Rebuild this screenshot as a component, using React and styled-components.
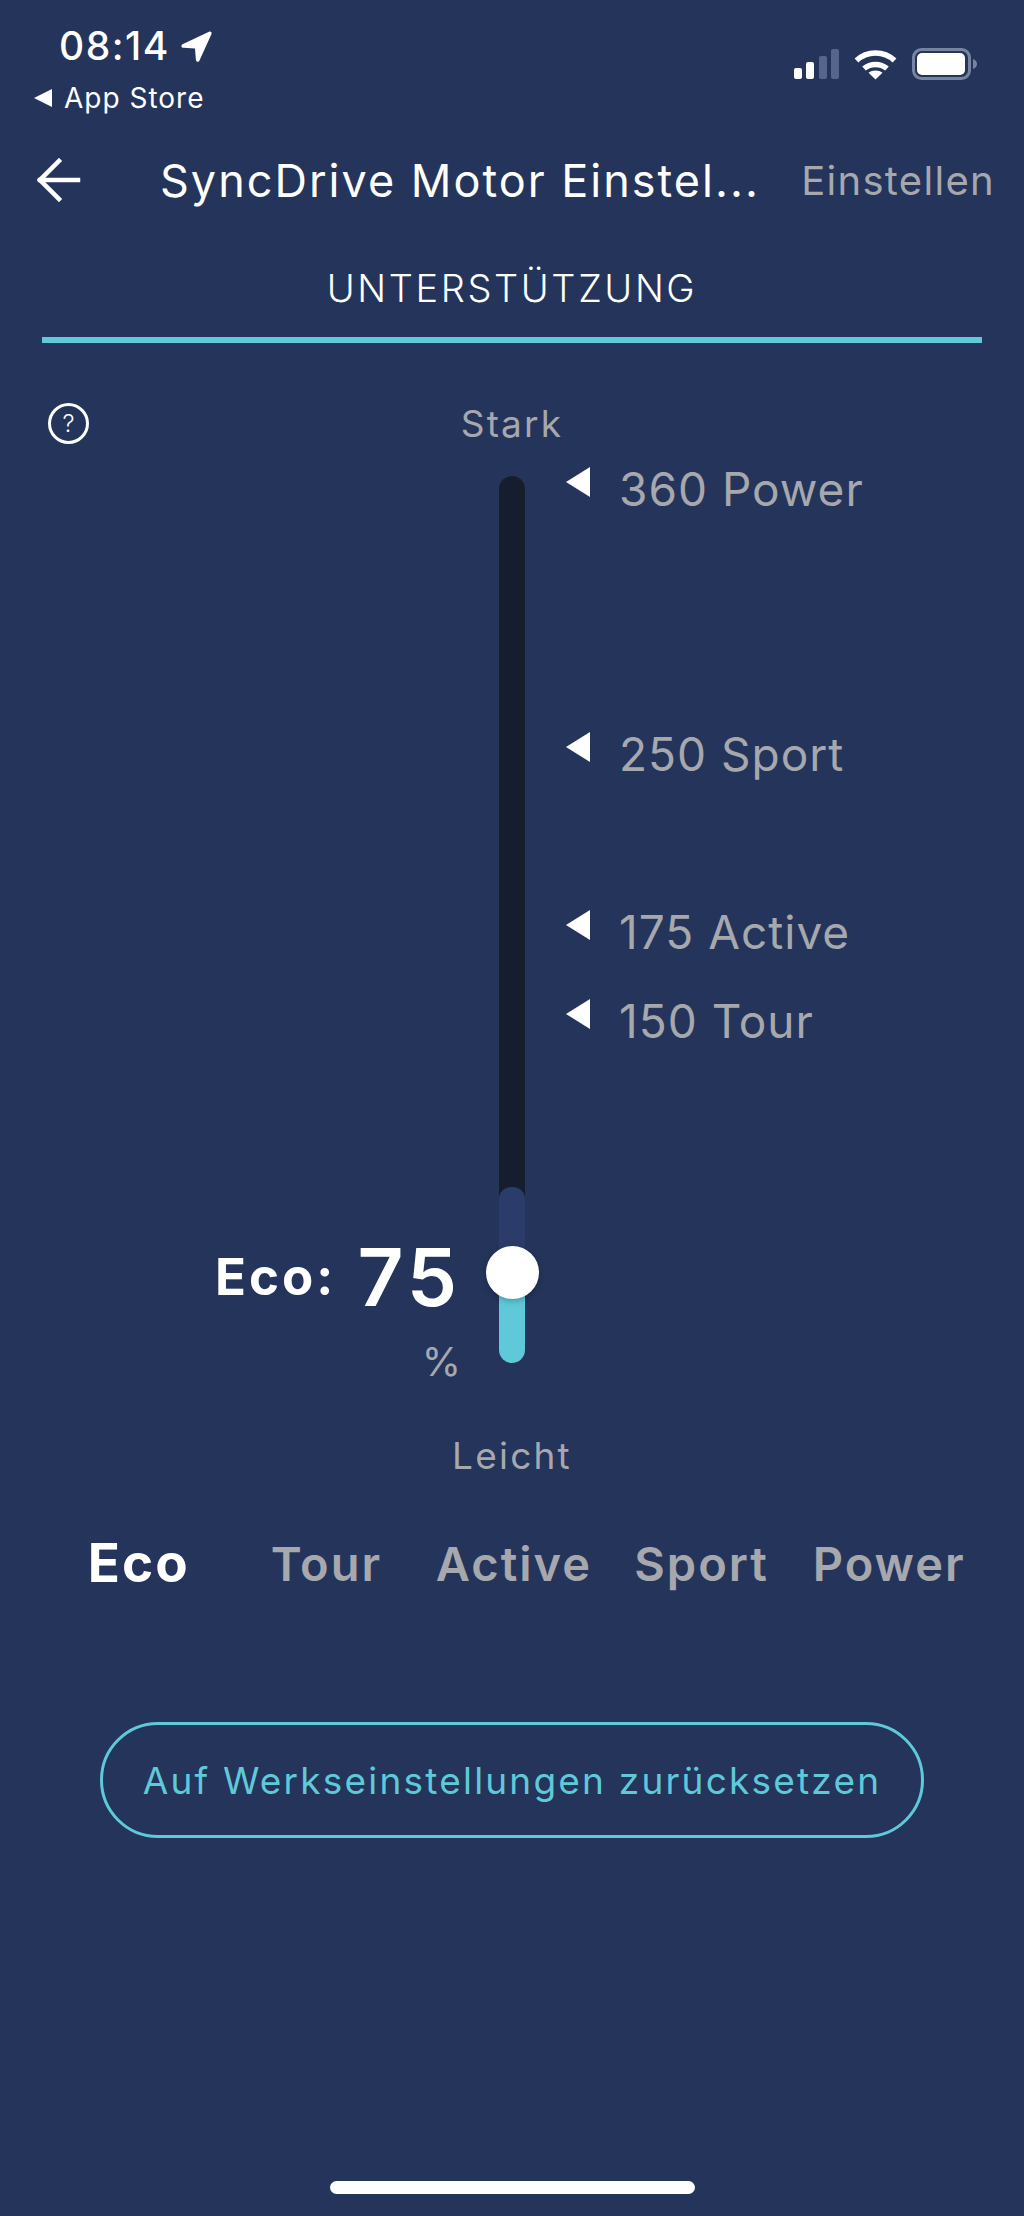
import styled, { createGlobalStyle } from 'styled-components';

const GlobalStyle = createGlobalStyle`
    html, body {
        margin: 0;
        padding: 0;
        background: #24345b;
    }
    * {
        box-sizing: border-box;
    }
`;

const GREY = '#a6a8ad';
const TEAL = '#5fc9d9';

const Page = styled.div`
    width: 1024px;
    height: 2216px;
    background: #24345b;
    color: #fff;
    font-family: Inter, "Liberation Sans", sans-serif;
    display: flex;
    flex-direction: column;
    overflow: hidden;
`;

const StatusBar = styled.div`
    height: 130px;
    padding: 26px 47px 0 34px;
    display: flex;
    justify-content: space-between;
    align-items: flex-start;
`;

const StatusLeft = styled.div`
    display: flex;
    flex-direction: column;
`;

const TimeRow = styled.div`
    display: flex;
    align-items: center;
    gap: 11px;
    margin-left: 25px;
    font-size: 39px;
    font-weight: 500;
    line-height: 40px;
    letter-spacing: 1.5px;
`;

const BackToStore = styled.div`
    display: flex;
    align-items: center;
    gap: 12px;
    margin-top: 17px;
    font-size: 28px;
    font-weight: 400;
    line-height: 30px;
    letter-spacing: 1px;
`;

const StoreArrow = styled.span`
    width: 0;
    height: 0;
    border-style: solid;
    border-width: 9px 18px 9px 0;
    border-color: transparent #fff transparent transparent;
`;

const StatusIcons = styled.div`
    display: flex;
    align-items: center;
    gap: 15px;
    margin-top: 22px;
`;

const NavBar = styled.div`
    height: 100px;
    padding: 0 29px 0 37px;
    display: flex;
    align-items: center;
`;

const Title = styled.div`
    margin-left: 79px;
    flex: 1;
    font-size: 45px;
    font-weight: 400;
    letter-spacing: 2px;
    white-space: nowrap;
`;

const NavAction = styled.div`
    font-size: 40px;
    letter-spacing: 1.3px;
    color: ${GREY};
`;

const Tab = styled.div`
    height: 113px;
    margin: 0 42px;
    padding-bottom: 26px;
    border-bottom: 6px solid ${TEAL};
    display: flex;
    align-items: flex-end;
    justify-content: center;
    font-size: 38px;
    font-weight: 300;
    line-height: 46px;
    letter-spacing: 2.6px;
`;

const Slider = styled.div`
    display: grid;
    grid-template-columns: 1fr 26px 1fr;
    grid-template-rows: 133px 887px 115px;
`;

const HelpCell = styled.div`
    padding: 60px 0 0 48px;
`;

const HelpCircle = styled.div`
    width: 41px;
    height: 41px;
    border: 3px solid #fff;
    border-radius: 50%;
    display: flex;
    align-items: center;
    justify-content: center;
    font-size: 24px;
    font-weight: 300;
`;

const EndLabel = styled.div`
    justify-self: center;
    align-self: ${(p) => (p.$bottom ? 'end' : 'start')};
    margin: ${(p) => (p.$bottom ? '0' : '59px 0 0')};
    font-size: 37px;
    line-height: 44px;
    letter-spacing: 2.2px;
    color: ${GREY};
    white-space: nowrap;
`;

const ReadoutCell = styled.div`
    display: flex;
    flex-direction: column;
    align-items: flex-end;
    justify-content: flex-end;
    padding-right: 38px;
    margin-bottom: -19px;
`;

const ReadoutRow = styled.div`
    display: flex;
    align-items: center;
    gap: 21px;
`;

const ModeName = styled.div`
    font-size: 51px;
    font-weight: 700;
    line-height: 80px;
    letter-spacing: 3px;
`;

const Value = styled.div`
    font-size: 80px;
    font-weight: 600;
    line-height: 80px;
    letter-spacing: 4px;
`;

const Unit = styled.div`
    margin-top: 25px;
    font-size: 40px;
    line-height: 40px;
    color: ${GREY};
`;

const Track = styled.div`
    position: relative;
    background: #161d2c;
    border-radius: 13px;
    display: flex;
    flex-direction: column;
    justify-content: flex-end;
`;

const TrackLimit = styled.div`
    height: 86px;
    background: #2b3c6b;
    border-radius: 12px 12px 0 0;
`;

const TrackFill = styled.div`
    height: 90px;
    background: ${TEAL};
    border-radius: 0 0 13px 13px;
`;

const Thumb = styled.div`
    position: absolute;
    left: 50%;
    bottom: 64px;
    width: 53px;
    height: 53px;
    margin-left: -26.5px;
    background: #fff;
    border-radius: 50%;
    box-shadow: 0 2px 6px rgba(0, 0, 0, 0.25);
`;

const Ticks = styled.div`
    padding-left: 41px;
    display: flex;
    flex-direction: column;
`;

const Tick = styled.div`
    height: 50px;
    margin-top: ${(p) => p.$gap}px;
    display: flex;
    align-items: center;
    gap: 29px;
    font-size: 46px;
    letter-spacing: 1px;
    color: ${GREY};
    white-space: nowrap;
`;

const TickArrow = styled.span`
    width: 0;
    height: 0;
    margin-bottom: 14px;
    border-style: solid;
    border-width: 15px 24px 15px 0;
    border-color: transparent #fff transparent transparent;
`;

const Modes = styled.div`
    margin: 33px 41px 0 45px;
    height: 104px;
    display: grid;
    grid-template-columns: repeat(5, 1fr);
    align-items: center;
    justify-items: center;
`;

const Mode = styled.div`
    font-size: ${(p) => (p.$active ? 53 : 47)}px;
    font-weight: ${(p) => (p.$active ? 700 : 600)};
    letter-spacing: 2px;
    color: ${(p) => (p.$active ? '#fff' : GREY)};
`;

const ResetButton = styled.button`
    width: 824px;
    height: 116px;
    margin: 107px auto 0;
    padding: 0;
    background: none;
    border: 3px solid ${TEAL};
    border-radius: 58px;
    color: ${TEAL};
    font-family: inherit;
    font-size: 37px;
    letter-spacing: 2.2px;
`;

const HomeBar = styled.div`
    width: 365px;
    height: 13px;
    margin: auto auto 22px;
    background: #fff;
    border-radius: 7px;
`;

const LocationIcon = () => (
    <svg width="31" height="31" viewBox="0 0 31 31" fill="#fff">
        <path d="M1.500 13.200 28 .8c1.700-.8 3.200.7 2.400 2.400L18.500 29.600c-.9 1.900-3.400 1.500-3.600-.6l-.9-11.500-11.600-.7c-2.200-.2-2.700-2.600-.9-3.600Z" />
    </svg>
);

const SignalIcon = () => (
    <svg width="45" height="30" viewBox="0 0 45 30">
        <rect x="0" y="19" width="8" height="11" rx="2" fill="#fff" />
        <rect x="12" y="13" width="8" height="17" rx="2" fill="#fff" />
        <rect x="25" y="7" width="8" height="23" rx="2" fill="#56668a" />
        <rect x="37" y="0" width="8" height="30" rx="2" fill="#56668a" />
    </svg>
);

const WifiIcon = () => (
    <svg width="43" height="32" viewBox="0 0 43 32" fill="none" stroke="#fff" strokeWidth="5.500">
        <path d="M2.500 12.500C13 2.500 30 2.500 40.500 12.500" />
        <path d="M10 20.500c6.500-5.500 16.500-5.500 23 0" />
        <path d="M21.500 31.500 14.500 24.800c4-3.100 10-3.100 14 0Z" fill="#fff" stroke="none" />
    </svg>
);

const BatteryIcon = () => (
    <svg width="65" height="32" viewBox="0 0 65 32">
        <rect x="1.500" y="1.500" width="56" height="29" rx="8" fill="none" stroke="#77849f" strokeWidth="3" />
        <rect x="5" y="5" width="48" height="22" rx="5" fill="#fff" />
        <path d="M61 11c2.500.8 4 2.800 4 5s-1.500 4.200-4 5Z" fill="#77849f" />
    </svg>
);

const BackArrow = () => (
    <svg width="44" height="44" viewBox="0 0 44 44" fill="none" stroke="#fff" strokeWidth="4.500" strokeLinecap="square">
        <path d="M3 22H41" />
        <path d="M22 3 3 22l19 19" />
    </svg>
);

const ticks = [
    { label: '360 Power', gap: -12 },
    { label: '250 Sport', gap: 215 },
    { label: '175 Active', gap: 128 },
    { label: '150 Tour', gap: 39 },
];

const modes = ['Eco', 'Tour', 'Active', 'Sport', 'Power'];

const App = () => {
    return (
        <Page>
            <GlobalStyle />
            <StatusBar>
                <StatusLeft>
                    <TimeRow>
                        08:14
                        <LocationIcon />
                    </TimeRow>
                    <BackToStore>
                        <StoreArrow />
                        App Store
                    </BackToStore>
                </StatusLeft>
                <StatusIcons>
                    <SignalIcon />
                    <WifiIcon />
                    <BatteryIcon />
                </StatusIcons>
            </StatusBar>
            <NavBar>
                <BackArrow />
                <Title>SyncDrive Motor Einstel...</Title>
                <NavAction>Einstellen</NavAction>
            </NavBar>
            <Tab>UNTERSTÜTZUNG</Tab>
            <Slider>
                <HelpCell>
                    <HelpCircle>?</HelpCircle>
                </HelpCell>
                <EndLabel>Stark</EndLabel>
                <div />
                <ReadoutCell>
                    <ReadoutRow>
                        <ModeName>Eco:</ModeName>
                        <Value>75</Value>
                    </ReadoutRow>
                    <Unit>%</Unit>
                </ReadoutCell>
                <Track>
                    <TrackLimit />
                    <TrackFill />
                    <Thumb />
                </Track>
                <Ticks>
                    {ticks.map((tick) => (
                        <Tick key={tick.label} $gap={tick.gap}>
                            <TickArrow />
                            {tick.label}
                        </Tick>
                    ))}
                </Ticks>
                <div />
                <EndLabel $bottom>Leicht</EndLabel>
                <div />
            </Slider>
            <Modes>
                {modes.map((mode, i) => (
                    <Mode key={mode} $active={i === 0}>{mode}</Mode>
                ))}
            </Modes>
            <ResetButton>Auf Werkseinstellungen zurücksetzen</ResetButton>
            <HomeBar />
        </Page>
    )
}

export default App;
